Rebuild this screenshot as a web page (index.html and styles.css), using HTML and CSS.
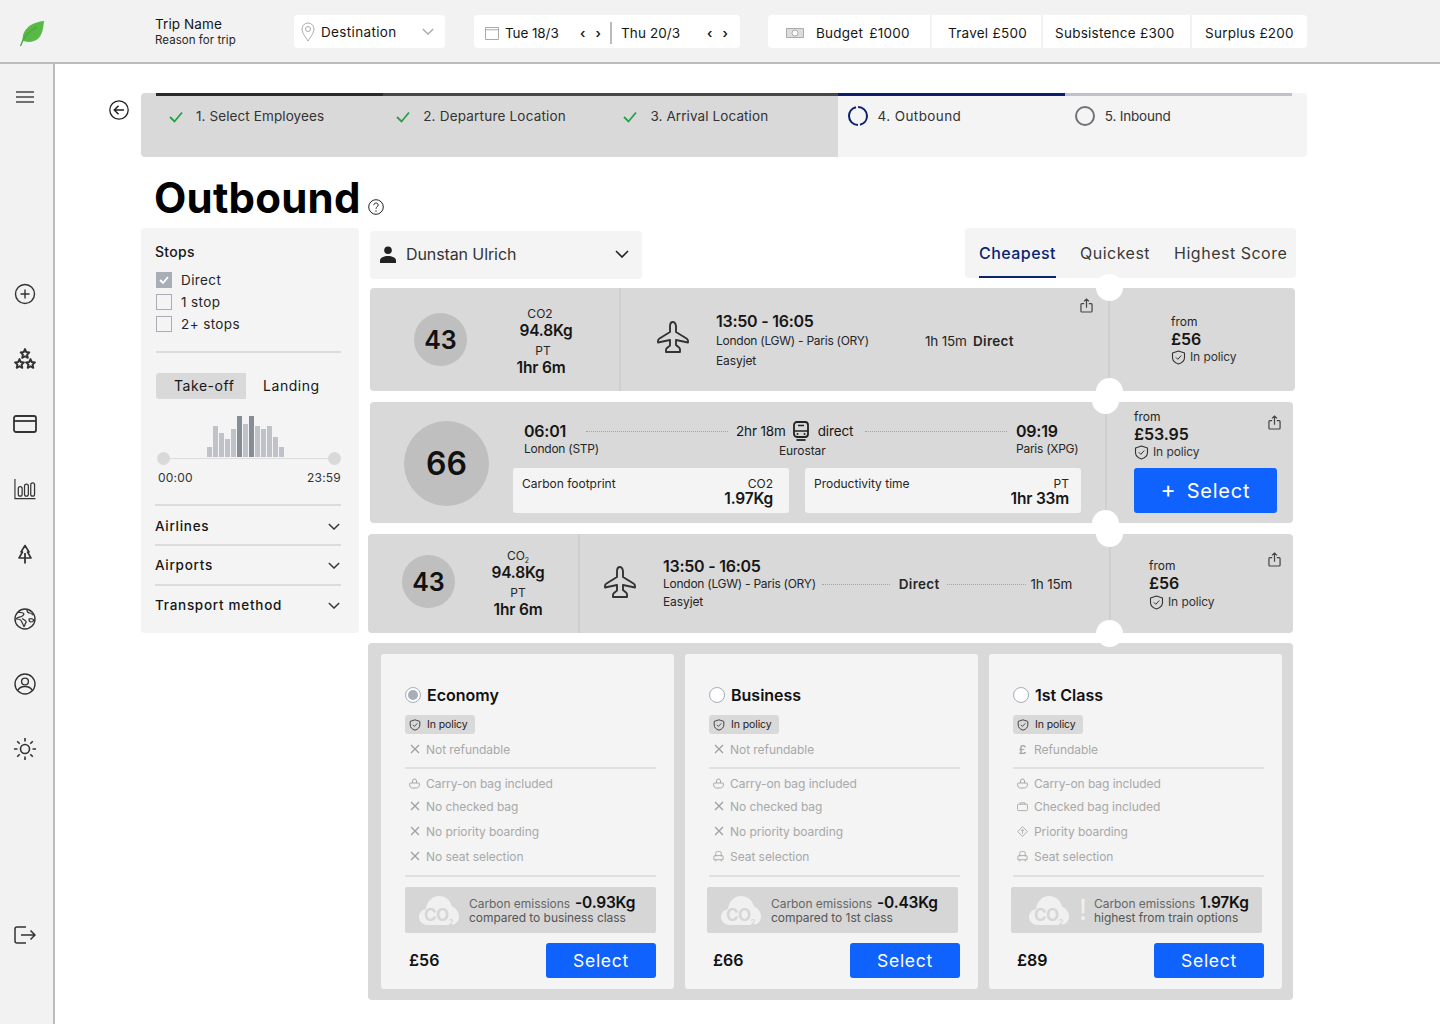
FILE: index.html
```html
<!DOCTYPE html>
<html lang="en">
<head>
<meta charset="utf-8">
<title>Outbound</title>
<link rel="stylesheet" href="styles.css">
</head>
<body>
<svg class="defs" width="0" height="0" aria-hidden="true">
  <defs>
    <symbol id="i-chev" viewBox="0 0 14 8"><path d="M1 1l6 6 6-6" fill="none" stroke="currentColor" stroke-width="1.6"/></symbol>
    <symbol id="i-check" viewBox="0 0 14 12"><path d="M1 6l4.500 4.500L13 1.500" fill="none" stroke="#24a148" stroke-width="1.800"/></symbol>
    <symbol id="i-plane" viewBox="0 0 32 32"><path d="M16 1c-1.900 0-3 2.200-3 4.500V11L2.500 17.500c-1 .7-1.500 1.500-1.500 2.500v1.500l12-2.500v5.500l-3 2.500c-.7.600-1 1.200-1 2V31h14v-2.500c0-.8-.3-1.400-1-2l-3-2.500V19l12 2.500V20c0-1-.5-1.800-1.500-2.500L19 11V5.500C19 3.200 17.900 1 16 1z" fill="none" stroke="#333" stroke-width="1.900" stroke-linejoin="round"/></symbol>
    <symbol id="i-share" viewBox="0 0 14 16"><path d="M4.500 6H2a1 1 0 0 0-1 1v7a1 1 0 0 0 1 1h10a1 1 0 0 0 1-1V7a1 1 0 0 0-1-1H9.500M7 10.500V1M4.300 3.500L7 1l2.700 2.500" fill="none" stroke="#444" stroke-width="1.300"/></symbol>
    <symbol id="i-shield" viewBox="0 0 15 15"><path d="M7.500 1L13.500 3v4.500c0 3.200-2.500 5.400-6 6.500-3.500-1.100-6-3.300-6-6.500V3z" fill="none" stroke="#333" stroke-width="1.100" stroke-linejoin="round"/><path d="M4.800 7.300l2 2 3.500-3.800" fill="none" stroke="#333" stroke-width="1"/></symbol>
    <symbol id="i-x" viewBox="0 0 10 10"><path d="M1 1l8 8M9 1l-8 8" fill="none" stroke="#a0a0a0" stroke-width="1.300"/></symbol>
    <symbol id="i-carry" viewBox="0 0 11 11"><path d="M3.500 5V3a2 2 0 0 1 4 0v2M1.500 5h8a1 1 0 0 1 1 1c0 2.600-1.200 4-3 4h-4c-1.800 0-3-1.400-3-4a1 1 0 0 1 1-1z" fill="none" stroke="#a8a8a8"/></symbol>
    <symbol id="i-bag" viewBox="0 0 12 10"><path d="M1.500 2.500h9a1 1 0 0 1 1 1v5a1 1 0 0 1-1 1h-9a1 1 0 0 1-1-1v-5a1 1 0 0 1 1-1zM3.500 2.500V1h5v1.500" fill="none" stroke="#a8a8a8"/></symbol>
    <symbol id="i-diamond" viewBox="0 0 12 12"><path d="M6 .7L11.300 6 6 11.300.7 6z" fill="none" stroke="#a8a8a8"/><path d="M6 8.500V4M4.300 5.500L6 3.800l1.700 1.700" fill="none" stroke="#a8a8a8" stroke-width=".9"/></symbol>
    <symbol id="i-seat" viewBox="0 0 11 12"><path d="M2.500 6V2.500a2 2 0 0 1 2-2h2a2 2 0 0 1 2 2V6M1.500 5h8a1 1 0 0 1 1 1v3.500H.5V6a1 1 0 0 1 1-1zM2.500 9.500v2M8.500 9.500v2" fill="none" stroke="#a8a8a8"/></symbol>
    <symbol id="i-cloud" viewBox="0 0 40 29"><path d="M9 29C4 29 0 25.500 0 21c0-4 3-7.300 7-8C8 5.500 13 0 20 0c6.500 0 11.500 4.500 13 10.500C37 12 40 16 40 20.500 40 25.500 36 29 31 29z" fill="#f0f0f0"/></symbol>
    <symbol id="i-star" viewBox="0 0 10 10"><path d="M5 1l1.200 2.700 2.800.3-2.100 2 .6 2.900L5 7.500 2.500 8.900l.6-2.900L1 4l2.800-.3z" fill="none" stroke="#333" stroke-width="1.800" stroke-linejoin="round"/></symbol>
  </defs>
</svg>

<header class="topbar">
  <div class="logo-slot">
    <svg class="logo" viewBox="0 0 25 27"><path d="M25 1C24 10 23 18 15 21 11 22.500 6 22 3.500 20.500 3 12 9 2.500 25 1z" fill="#58b947"/><path d="M1.500 26C4 18 10 11 18 7" fill="none" stroke="#4aa83c" stroke-width="1.300"/></svg>
  </div>
  <div class="trip">
    <div class="trip-name">Trip Name</div>
    <div class="trip-reason">Reason for trip</div>
  </div>
  <div class="pill pill-dest">
    <svg class="ic-pin" viewBox="0 0 14 20"><path d="M7 1a6 6 0 0 0-6 6c0 4.200 4 8.500 6 12 2-3.500 6-7.800 6-12a6 6 0 0 0-6-6z" fill="none" stroke="#aaa"/><circle cx="7" cy="7" r="2.500" fill="none" stroke="#aaa"/></svg>
    <span class="dest-label">Destination</span>
    <svg class="ic-dest-chev"><use href="#i-chev"/></svg>
  </div>
  <div class="pill pill-date">
    <svg class="ic-cal" viewBox="0 0 14 14"><path d="M.5 1.500h13v12H.5zM.5 3.800h13" fill="none" stroke="#aaa"/></svg>
    <span class="date-a">Tue 18/3</span>
    <span class="arrows arrows-a">‹ ›</span>
    <span class="date-sep"></span>
    <span class="date-b">Thu 20/3</span>
    <span class="arrows arrows-b">‹ ›</span>
  </div>
  <div class="budget">
    <div class="budget-seg seg-1">
      <svg class="ic-cash" viewBox="0 0 18 10"><path d="M.5.500h17v9H.5z" fill="#ddd" stroke="#aaa"/><circle cx="9" cy="5" r="3" fill="#fff" stroke="#aaa"/></svg>
      <span>Budget</span><span class="b-amt">£1000</span>
    </div>
    <div class="budget-seg seg-2">Travel £500</div>
    <div class="budget-seg seg-3">Subsistence £300</div>
    <div class="budget-seg seg-4">Surplus £200</div>
  </div>
</header>

<div class="layout">
  <nav class="sidebar">
    <svg class="nav-burger" viewBox="0 0 18 12"><path d="M0 1h18M0 6h18M0 11h18" stroke="#444" stroke-width="1.400"/></svg>
    <div class="nav-stack">
      <div class="nav-item"><svg viewBox="0 0 22 22"><circle cx="11" cy="11" r="9.500" fill="none" stroke="#333" stroke-width="1.400"/><path d="M11 6.500v9M6.500 11h9" stroke="#333" stroke-width="1.400"/></svg></div>
      <div class="nav-item"><svg viewBox="0 0 22 22"><use href="#i-star" x="5.500" y="0" width="11" height="11"/><use href="#i-star" x="0" y="10" width="11" height="11"/><use href="#i-star" x="11" y="10" width="11" height="11"/></svg></div>
      <div class="nav-item"><svg viewBox="0 0 24 18" class="nav-card"><rect x="1" y="1" width="22" height="16" rx="2" fill="none" stroke="#333" stroke-width="1.800"/><path d="M1 6h22" stroke="#333" stroke-width="1.800"/></svg></div>
      <div class="nav-item"><svg viewBox="0 0 23 23"><path d="M1 1v20.500h21.500" fill="none" stroke="#333" stroke-width="1.200"/><rect x="4.500" y="9" width="4" height="10" rx="2" fill="none" stroke="#333" stroke-width="1.300"/><rect x="11" y="6.500" width="4" height="12.500" rx="2" fill="none" stroke="#333" stroke-width="1.300"/><rect x="17.500" y="5" width="4" height="14" rx="2" fill="none" stroke="#333" stroke-width="1.300"/></svg></div>
      <div class="nav-item"><svg viewBox="0 0 14 20" class="nav-tree"><path d="M7 1.500L11 8H9.500L13 14H1L4.500 8H3z" fill="none" stroke="#333" stroke-width="1.600" stroke-linejoin="round"/><path d="M7 9v10.500" stroke="#333" stroke-width="1.800"/></svg></div>
      <div class="nav-item"><svg viewBox="0 0 22 22"><circle cx="11" cy="11" r="10" fill="none" stroke="#333" stroke-width="1.400"/><path d="M4 4c2 1 3 0 5 1s0 3-1.500 3.500S3 9 2 11c2 0 4 0 5 1.500s2 4 3 6c1-1 1-3 2-4s-2-3-4-4M13 2c0 2 1 3 3 3s2 2 3 2M15 11c2-1 4 0 5 1-1 2-2 2-3 2s-2-1-2-3z" fill="none" stroke="#333" stroke-width="1.200"/></svg></div>
      <div class="nav-item"><svg viewBox="0 0 22 22"><circle cx="11" cy="11" r="10" fill="none" stroke="#333" stroke-width="1.400"/><circle cx="11" cy="8.500" r="3.400" fill="none" stroke="#333" stroke-width="1.400"/><path d="M3.800 17.500c1.200-2.800 4-4 7.200-4s6 1.200 7.200 4" fill="none" stroke="#333" stroke-width="1.400"/></svg></div>
      <div class="nav-item"><svg viewBox="0 0 22 22"><circle cx="11" cy="11" r="4.500" fill="none" stroke="#333" stroke-width="1.600"/><path d="M11 0v3.500M11 18.500V22M0 11h3.500M18.500 11H22M3.200 3.200l2.500 2.500M16.300 16.300l2.500 2.500M18.800 3.200l-2.500 2.500M5.700 16.300l-2.500 2.500" stroke="#333" stroke-width="1.600"/></svg></div>
    </div>
    <div class="nav-bottom"><svg viewBox="0 0 22 18"><path d="M12 1H3a2 2 0 0 0-2 2v12a2 2 0 0 0 2 2h9" fill="none" stroke="#333" stroke-width="1.500"/><path d="M7 9h14M16.500 4.500L21 9l-4.500 4.500" fill="none" stroke="#333" stroke-width="1.500"/></svg></div>
  </nav>

  <main class="main">
    <div class="back-col">
      <svg class="back" viewBox="0 0 20 20"><circle cx="10" cy="10" r="9.200" fill="none" stroke="#222" stroke-width="1.300"/><path d="M15 10H5.500M9.500 5.800L5.300 10l4.200 4.200" fill="none" stroke="#222" stroke-width="1.500"/></svg>
    </div>
    <div class="content">
      <ol class="stepper">
        <li class="step step-done step-first"><svg class="ic-check"><use href="#i-check"/></svg>1. Select Employees</li>
        <li class="step step-done step-second"><svg class="ic-check"><use href="#i-check"/></svg>2. Departure Location</li>
        <li class="step step-done"><svg class="ic-check"><use href="#i-check"/></svg>3. Arrival Location</li>
        <li class="step step-active"><svg class="ic-ring" viewBox="0 0 20 20"><circle cx="10" cy="10" r="9" fill="none" stroke="#0a1f6e" stroke-width="2" stroke-dasharray="12 2.100 26 2.100 14 2"/></svg>4. Outbound</li>
        <li class="step step-todo"><svg class="ic-ring" viewBox="0 0 20 20"><circle cx="10" cy="10" r="9" fill="none" stroke="#6f727a" stroke-width="2"/></svg>5. Inbound</li>
      </ol>

      <div class="title-row">
        <h1 class="title">Outbound</h1>
        <svg class="help" viewBox="0 0 16 16"><circle cx="8" cy="8" r="7.300" fill="none" stroke="#222"/><path d="M5.800 6.200c0-1.300 1-2.200 2.200-2.200s2.200.8 2.200 2c0 1.700-2.200 1.800-2.200 3.800" fill="none" stroke="#222"/><circle cx="8" cy="12" r=".7" fill="#222"/></svg>
      </div>

      <div class="columns">
        <aside class="filters">
          <div class="f-title">Stops</div>
          <label class="f-check"><span class="box box-on"><svg viewBox="0 0 10 8"><path d="M1 4l3 3 5-6" fill="none" stroke="#fff" stroke-width="1.800"/></svg></span>Direct</label>
          <label class="f-check"><span class="box"></span>1 stop</label>
          <label class="f-check"><span class="box"></span>2+ stops</label>
          <div class="f-rule f-rule-stops"></div>
          <div class="f-tabs">
            <span class="f-tab f-tab-on">Take-off</span>
            <span class="f-tab">Landing</span>
          </div>
          <div class="hist">
            <div class="bars">
              <i class="bar" style="height:10px"></i><i class="bar" style="height:31px"></i><i class="bar" style="height:24px"></i><i class="bar" style="height:18px"></i><i class="bar" style="height:28px"></i><i class="bar bar-dark" style="height:41px"></i><i class="bar" style="height:33px"></i><i class="bar bar-dark" style="height:41px"></i><i class="bar" style="height:31px"></i><i class="bar" style="height:28px"></i><i class="bar" style="height:31px"></i><i class="bar" style="height:20px"></i><i class="bar" style="height:10px"></i>
            </div>
            <div class="slider"><span class="knob"></span><span class="knob"></span></div>
            <div class="hist-times"><span>00:00</span><span>23:59</span></div>
          </div>
          <div class="f-acc f-acc-first"><span>Airlines</span><svg class="ic-acc"><use href="#i-chev"/></svg></div>
          <div class="f-acc"><span>Airports</span><svg class="ic-acc"><use href="#i-chev"/></svg></div>
          <div class="f-acc"><span>Transport method</span><svg class="ic-acc"><use href="#i-chev"/></svg></div>
        </aside>

        <section class="results">
          <div class="results-top">
            <div class="person">
              <svg class="ic-person" viewBox="0 0 16 17"><circle cx="8" cy="4.200" r="3.800" fill="#222"/><path d="M0 17v-2.500C0 11.500 4 10 8 10s8 1.500 8 4.500V17z" fill="#222"/></svg>
              <span class="person-name">Dunstan Ulrich</span>
              <svg class="ic-person-chev"><use href="#i-chev"/></svg>
            </div>
            <div class="sort">
              <span class="sort-tab sort-on">Cheapest</span>
              <span class="sort-tab">Quickest</span>
              <span class="sort-tab">Highest Score</span>
            </div>
          </div>

          <article class="ticket ticket-a">
            <div class="score-col score-col-a">
              <div class="score score-sm">43</div>
              <div class="stats stats-a">
                <div class="stat-label nudge-l">CO2</div><div class="stat-val nudge-r">94.8Kg</div>
                <div class="stat-label stat-gap">PT</div><div class="stat-val nudge-l2">1hr 6m</div>
              </div>
            </div>
            <div class="mid mid-a">
              <svg class="ic-plane"><use href="#i-plane"/></svg>
              <div class="leg">
                <div class="leg-time">13:50 - 16:05</div>
                <div class="leg-route"><span>London (LGW) - Paris (ORY)</span><span class="route-dur">1h 15m</span><strong class="route-direct">Direct</strong></div>
                <div class="leg-air">Easyjet</div>
              </div>
              <svg class="share share-a"><use href="#i-share"/></svg>
            </div>
            <div class="price price-a">
              <div class="from">from</div><div class="amount">£56</div>
              <div class="policy"><svg class="ic-shield"><use href="#i-shield"/></svg>In policy</div>
            </div>
          </article>

          <article class="ticket ticket-b">
            <div class="score-col score-col-b"><div class="score score-lg">66</div></div>
            <div class="rail">
              <div class="rail-top">
                <div class="stop stop-from"><div class="leg-time">06:01</div><div class="stop-name">London (STP)</div></div>
                <span class="dots dots-rail"></span>
                <div class="rail-mid">
                  <div class="rail-dur"><span>2hr 18m</span><svg class="ic-train" viewBox="0 0 16 20"><rect x="1" y="1" width="14" height="15" rx="3" fill="none" stroke="#222" stroke-width="1.800"/><path d="M1 10h14M5 4.500h6" stroke="#222" stroke-width="1.600"/><path d="M3.500 19h9" stroke="#222" stroke-width="1.800"/><circle cx="4.500" cy="13" r="1" fill="#222"/><circle cx="11.500" cy="13" r="1" fill="#222"/></svg><span>direct</span></div>
                  <div class="rail-op">Eurostar</div>
                </div>
                <span class="dots dots-rail"></span>
                <div class="stop stop-to"><div class="leg-time">09:19</div><div class="stop-name">Paris (XPG)</div></div>
              </div>
              <div class="rail-boxes">
                <div class="metric"><span class="metric-name">Carbon footprint</span><div class="metric-side"><div class="metric-label">CO2</div><div class="stat-val">1.97Kg</div></div></div>
                <div class="metric"><span class="metric-name">Productivity time</span><div class="metric-side"><div class="metric-label">PT</div><div class="stat-val">1hr 33m</div></div></div>
              </div>
            </div>
            <div class="price price-b">
              <div class="from">from</div><div class="amount">£53.95</div>
              <div class="policy"><svg class="ic-shield"><use href="#i-shield"/></svg>In policy</div>
              <button class="btn-plus" type="button"><span class="plus">+</span>Select</button>
              <svg class="share share-b"><use href="#i-share"/></svg>
            </div>
          </article>

          <article class="ticket ticket-c">
            <div class="score-col score-col-c">
              <div class="score score-sm">43</div>
              <div class="stats stats-c">
                <div class="stat-label">CO<sub>2</sub></div><div class="stat-val">94.8Kg</div>
                <div class="stat-label stat-gap">PT</div><div class="stat-val">1hr 6m</div>
              </div>
            </div>
            <div class="mid mid-c">
              <svg class="ic-plane"><use href="#i-plane"/></svg>
              <div class="leg">
                <div class="leg-time">13:50 - 16:05</div>
                <div class="leg-route"><span>London (LGW) - Paris (ORY)</span><span class="dots dots-c1"></span><strong class="route-direct">Direct</strong><span class="dots dots-c2"></span><span class="route-dur-c">1h 15m</span></div>
                <div class="leg-air">Easyjet</div>
              </div>
            </div>
            <div class="price price-c">
              <div class="from">from</div><div class="amount">£56</div>
              <div class="policy"><svg class="ic-shield"><use href="#i-shield"/></svg>In policy</div>
              <svg class="share share-c"><use href="#i-share"/></svg>
            </div>
          </article>

          <div class="classes">
            <div class="class-card">
              <div class="class-head"><span class="radio radio-on"></span><span class="class-name">Economy</span></div>
              <div class="badge"><svg class="ic-badge"><use href="#i-shield"/></svg>In policy</div>
              <div class="feat feat-first"><span class="feat-ic"><svg class="ic-x"><use href="#i-x"/></svg></span>Not refundable</div>
              <div class="rule"></div>
              <div class="feat feat-r1"><span class="feat-ic"><svg class="ic-sm"><use href="#i-carry"/></svg></span>Carry-on bag included</div>
              <div class="feat feat-r2"><span class="feat-ic"><svg class="ic-x"><use href="#i-x"/></svg></span>No checked bag</div>
              <div class="feat feat-r3"><span class="feat-ic"><svg class="ic-x"><use href="#i-x"/></svg></span>No priority boarding</div>
              <div class="feat feat-r3"><span class="feat-ic"><svg class="ic-x"><use href="#i-x"/></svg></span>No seat selection</div>
              <div class="rule rule-b"></div>
              <div class="carbon">
                <div class="cloud"><svg class="ic-cloud"><use href="#i-cloud"/></svg><span class="cloud-text">CO<sub>2</sub></span></div>
                <div class="carbon-text"><div class="carbon-l1">Carbon emissions <strong>-0.93Kg</strong></div><div class="carbon-l2">compared to business class</div></div>
              </div>
              <div class="class-foot"><span class="class-price">£56</span><button class="btn" type="button">Select</button></div>
            </div>

            <div class="class-card">
              <div class="class-head"><span class="radio"></span><span class="class-name">Business</span></div>
              <div class="badge"><svg class="ic-badge"><use href="#i-shield"/></svg>In policy</div>
              <div class="feat feat-first"><span class="feat-ic"><svg class="ic-x"><use href="#i-x"/></svg></span>Not refundable</div>
              <div class="rule"></div>
              <div class="feat feat-r1"><span class="feat-ic"><svg class="ic-sm"><use href="#i-carry"/></svg></span>Carry-on bag included</div>
              <div class="feat feat-r2"><span class="feat-ic"><svg class="ic-x"><use href="#i-x"/></svg></span>No checked bag</div>
              <div class="feat feat-r3"><span class="feat-ic"><svg class="ic-x"><use href="#i-x"/></svg></span>No priority boarding</div>
              <div class="feat feat-r3"><span class="feat-ic"><svg class="ic-sm"><use href="#i-seat"/></svg></span>Seat selection</div>
              <div class="rule rule-b"></div>
              <div class="carbon carbon-shift">
                <div class="cloud"><svg class="ic-cloud"><use href="#i-cloud"/></svg><span class="cloud-text">CO<sub>2</sub></span></div>
                <div class="carbon-text"><div class="carbon-l1">Carbon emissions <strong>-0.43Kg</strong></div><div class="carbon-l2">compared to 1st class</div></div>
              </div>
              <div class="class-foot"><span class="class-price">£66</span><button class="btn" type="button">Select</button></div>
            </div>

            <div class="class-card">
              <div class="class-head"><span class="radio"></span><span class="class-name">1st Class</span></div>
              <div class="badge"><svg class="ic-badge"><use href="#i-shield"/></svg>In policy</div>
              <div class="feat feat-first"><span class="feat-ic feat-pound">£</span>Refundable</div>
              <div class="rule"></div>
              <div class="feat feat-r1"><span class="feat-ic"><svg class="ic-sm"><use href="#i-carry"/></svg></span>Carry-on bag included</div>
              <div class="feat feat-r2"><span class="feat-ic"><svg class="ic-sm"><use href="#i-bag"/></svg></span>Checked bag included</div>
              <div class="feat feat-r3"><span class="feat-ic"><svg class="ic-sm"><use href="#i-diamond"/></svg></span>Priority boarding</div>
              <div class="feat feat-r3"><span class="feat-ic"><svg class="ic-sm"><use href="#i-seat"/></svg></span>Seat selection</div>
              <div class="rule rule-b"></div>
              <div class="carbon carbon-shift carbon-wide">
                <div class="cloud"><svg class="ic-cloud"><use href="#i-cloud"/></svg><span class="cloud-text">CO<sub>2</sub></span></div>
                <span class="bang">!</span>
                <div class="carbon-text"><div class="carbon-l1">Carbon emissions <strong>1.97Kg</strong></div><div class="carbon-l2">highest from train options</div></div>
              </div>
              <div class="class-foot"><span class="class-price">£89</span><button class="btn" type="button">Select</button></div>
            </div>
          </div>
        </section>
      </div>
    </div>
  </main>
</div>
</body>
</html>
```
FILE: styles.css
```css
* { box-sizing: border-box; }
html, body { margin: 0; padding: 0; }
body {
  background: #fff;
  color: #161616;
  font-family: "Inter", "Liberation Sans", sans-serif;
  font-size: 14px;
  height: 1024px;
  overflow: hidden;
}
.defs { position: absolute; }
svg { display: block; }
button { font-family: inherit; border: 0; cursor: pointer; }

/* top bar */
.topbar {
  height: 64px;
  display: flex;
  align-items: flex-start;
  padding-top: 15px;
  background: #f2f2f2;
  border-bottom: 2px solid #bcbcbc;
}
.logo-slot { width: 155px; padding: 5px 0 0 19px; }
.logo { width: 25px; height: 27px; }
.trip { width: 139px; padding-top: 1px; }
.trip-name { font-size: 13.5px; line-height: 17px; letter-spacing: .1px; }
.trip-reason { font-size: 11.5px; line-height: 14px; letter-spacing: .05px; color: #262626; }
.pill {
  background: #fff;
  border-radius: 4px;
  height: 33px;
  display: flex;
  align-items: center;
  font-size: 13.5px;
  letter-spacing: -.1px;
}
.pill-dest { width: 151px; padding-left: 7px; margin-right: 29px; }
.ic-pin { width: 14px; height: 20px; margin-right: 6px; }
.dest-label { flex: 1; letter-spacing: .35px; }
.ic-dest-chev { width: 12px; height: 7px; margin-right: 11px; color: #aaa; }
.pill-date { width: 266px; padding: 2px 0 0 11px; margin-right: 28px; }
.ic-cal { width: 14px; height: 14px; margin-right: 6px; }
.date-a { width: 75px; }
.arrows { font-size: 13px; word-spacing: 7px; font-weight: 600; }
.arrows-a { width: 30px; }
.date-sep { width: 2px; height: 22px; background: #bbb; margin-right: 9px; }
.date-b { width: 86px; letter-spacing: .1px; }
.budget { display: flex; gap: 2px; width: 539px; height: 33px; }
.budget-seg {
  background: #fff;
  display: flex;
  align-items: center;
  padding-top: 2px;
  font-size: 13.5px;
  letter-spacing: .25px;
  white-space: nowrap;
}
.seg-1 { width: 162px; padding-left: 18px; border-radius: 4px 0 0 4px; }
.seg-2 { width: 109px; padding-left: 16px; }
.seg-3 { width: 147px; padding-left: 12px; }
.seg-4 { width: 115px; padding-left: 13px; border-radius: 0 4px 4px 0; }
.ic-cash { width: 18px; height: 10px; margin-right: 12px; }
.b-amt { margin-left: 6px; }

/* layout */
.layout { display: flex; height: 960px; }
.sidebar {
  width: 55px;
  background: #f2f2f2;
  border-right: 2px solid #bcbcbc;
  padding-right: 3px;
  display: flex;
  flex-direction: column;
  align-items: center;
}
.nav-burger { width: 18px; height: 12px; margin-top: 27px; }
.nav-stack { margin-top: 158px; }
.nav-item { width: 50px; height: 65px; display: flex; align-items: center; justify-content: center; }
.nav-item svg { width: 22px; height: 22px; }
.nav-item .nav-card { width: 24px; height: 18px; }
.nav-item .nav-tree { width: 14px; height: 20px; }
.nav-bottom { margin-top: 145px; }
.nav-bottom svg { width: 22px; height: 18px; }

.main { flex: 1; display: flex; padding: 29px 0 0 54px; }
.back-col { width: 32px; padding-top: 7px; }
.back { width: 20px; height: 20px; }
.content { width: 1166px; }

/* stepper */
.stepper {
  list-style: none;
  margin: 0;
  padding: 0 15px;
  height: 64px;
  display: grid;
  grid-template-columns: repeat(5, 1fr);
  background: linear-gradient(90deg, #d9d9d9 697px, #f4f4f4 697px);
  border-radius: 4px;
}
.step {
  border-top: 3px solid #474747;
  padding: 10px 0 0 13px;
  height: 64px;
  display: flex;
  align-items: flex-start;
  font-size: 13.5px;
  line-height: 20px;
  letter-spacing: .1px;
  color: #333;
}
.step-first { border-top-color: #2a2a2a; }
.step-second { letter-spacing: .2px; }
.step-active { border-top-color: #0a1f6e; padding-left: 10px; letter-spacing: .4px; }
.step-todo { border-top-color: #bfc2cc; padding-left: 10px; letter-spacing: -.2px; }
.ic-check { width: 14px; height: 12px; margin: 5px 13px 0 0; }
.ic-ring { width: 20px; height: 20px; margin-right: 10px; }

/* title */
.title-row { height: 71px; padding: 17px 0 0 13px; display: flex; }
.title { margin: 0; font-size: 42px; line-height: 48px; font-weight: 700; letter-spacing: .2px; color: #000; }
.help { width: 16px; height: 16px; margin: 25px 0 0 7px; }

.columns { display: flex; gap: 9px; }

/* filters */
.filters {
  width: 218px;
  height: 405px;
  background: #f4f4f4;
  border-radius: 4px;
  padding: 15px 18px 0 14px;
  flex-shrink: 0;
}
.f-title { font-size: 14px; line-height: 18px; font-weight: 500; letter-spacing: .3px; margin-bottom: 11px; }
.f-check {
  display: flex;
  align-items: center;
  height: 16px;
  margin: 0 0 6px 1px;
  font-size: 13.5px;
  letter-spacing: .4px;
  color: #262626;
}
.box {
  width: 16px;
  height: 16px;
  border: 1px solid #a8adb8;
  margin-right: 9px;
  display: flex;
  align-items: center;
  justify-content: center;
}
.box-on { background: #a8adb8; }
.box svg { width: 10px; height: 8px; }
.f-rule { height: 2px; background: #dcdcdc; margin-left: 1px; }
.f-rule-stops { margin-top: 19px; }
.f-tabs { display: flex; margin: 20px 0 0 1px; font-size: 14px; letter-spacing: .55px; }
.f-tab { height: 26px; line-height: 26px; padding-left: 17px; flex: none; }
.f-tab-on { width: 90px; padding-left: 18px; background: #d9d9d9; border-radius: 3px 0 0 3px; }
.hist { margin: 17px 0 0 1px; position: relative; }
.bars { display: flex; align-items: flex-end; gap: 1px; height: 41px; margin-left: 51px; }
.bar { width: 5px; background: #bfc3c9; display: block; }
.bar-dark { background: #878d96; }
.slider { height: 1px; background: #dcdcdc; margin: 1px 7px 0 8px; position: relative; display: flex; justify-content: space-between; }
.knob { width: 13px; height: 13px; border-radius: 50%; background: #d9d9d9; margin: -6px -7px 0; }
.hist-times { display: flex; justify-content: space-between; margin: 11px 0 0 2px; font-size: 12px; line-height: 16px; letter-spacing: .2px; color: #333; }
.f-acc {
  border-top: 2px solid #dcdcdc;
  height: 40px;
  display: flex;
  align-items: center;
  justify-content: space-between;
  font-size: 13.5px;
  font-weight: 500;
  letter-spacing: .72px;
  padding-right: 1px;
}
.f-acc-first { margin-top: 18px; padding-top: 2px; }
.ic-acc { width: 12px; height: 7px; color: #333; }

/* results */
.results { width: 928px; }
.results-top { display: flex; justify-content: space-between; height: 50px; padding-left: 2px; }
.person {
  width: 272px;
  height: 48px;
  margin-top: 3px;
  background: #f4f4f4;
  border-radius: 4px;
  display: flex;
  align-items: center;
  padding: 0 13px 2px 10px;
}
.ic-person { width: 16px; height: 17px; margin-right: 10px; }
.person-name { flex: 1; font-size: 16px; color: #333; letter-spacing: -.1px; }
.ic-person-chev { width: 14px; height: 8px; color: #222; }
.sort {
  width: 331px;
  height: 50px;
  background: #f4f4f4;
  border-radius: 4px;
  display: flex;
  padding-left: 14px;
  gap: 24px;
}
.sort-tab { font-size: 16px; line-height: 50px; height: 50px; letter-spacing: .5px; color: #393939; white-space: nowrap; }
.sort-on { color: #0a2472; border-bottom: 2px solid #0a2472; font-weight: 500; letter-spacing: .45px; }

/* tickets */
.ticket { position: relative; display: flex; background: #d9d9d9; border-radius: 4px; }
.ticket::before, .ticket::after {
  content: "";
  position: absolute;
  width: 27px;
  height: 27px;
  border-radius: 50%;
  background: #fff;
  z-index: 1;
}
.ticket-a { width: 925px; height: 103px; margin: 10px 0 0 2px; }
.ticket-a::before { left: 726px; top: -14px; }
.ticket-a::after { left: 726px; bottom: -14px; }
.ticket-b { width: 923px; height: 121px; margin: 11px 0 0 2px; }
.ticket-b::before { left: 722px; top: -15px; }
.ticket-b::after { left: 722px; bottom: -14px; }
.ticket-c { width: 925px; height: 99px; margin: 11px 0 0; }
.ticket-c::before { left: 728px; top: -14px; }
.ticket-c::after { left: 728px; bottom: -14px; }

.score-col { display: flex; align-items: center; flex-shrink: 0; border-right: 2px solid #cfcfcf; }
.score-col-a { width: 251px; padding-left: 44px; }
.score-col-b { width: 143px; padding: 2px 0 0 34px; border-right: 0; }
.score-col-c { width: 212px; padding-left: 34px; }
.score {
  border-radius: 50%;
  background: #bfbfbf;
  display: flex;
  align-items: center;
  justify-content: center;
  font-weight: 600;
  color: #111;
  flex-shrink: 0;
}
.score-sm { width: 53px; height: 53px; font-size: 25px; }
.score-col-c .score { margin-bottom: 4px; }
.score-lg { width: 85px; height: 85px; font-size: 32px; }
.stats { width: 100px; margin-left: 26px; text-align: center; }
.stats-a { padding-top: 4px; }
.nudge-l { padding-right: 6px; }
.nudge-r { padding-left: 6px; }
.nudge-l2 { padding-right: 4px; }
.stats-c { margin-left: 13px; }
.stat-label { font-size: 12px; line-height: 15px; color: #262626; }
.stat-label sub { font-size: 7px; line-height: 0; }
.stat-val { font-size: 15.5px; line-height: 19px; font-weight: 600; color: #161616; letter-spacing: -.2px; }
.stat-gap { margin-top: 3px; }

.mid { position: relative; display: flex; flex-shrink: 0; }
.mid-a { width: 487px; padding: 23px 0 0 36px; }
.mid-c { width: 529px; padding: 22px 0 0 24px; }
.ic-plane { width: 32px; height: 32px; margin: 10px 27px 0 0; }
.leg { flex: 1; }
.leg-time { font-size: 16px; line-height: 20px; font-weight: 600; color: #161616; letter-spacing: -.25px; white-space: nowrap; }
.leg-route { display: flex; align-items: center; font-size: 12px; line-height: 16px; margin-top: 2px; color: #262626; white-space: nowrap; letter-spacing: -.26px; }
.leg-air { font-size: 12px; line-height: 16px; margin-top: 4px; color: #262626; letter-spacing: -.1px; }
.mid-c .leg-route { margin-top: 0; }
.mid-c .leg-air { margin-top: 2px; }
.route-dur { position: absolute; left: 304px; font-size: 13.5px; letter-spacing: -.2px; }
.route-direct { position: absolute; left: 352px; font-size: 13.5px; font-weight: 600; letter-spacing: .3px; }
.mid-c .route-direct { position: static; margin: 0 7px 0 9px; }
.route-dur-c { font-size: 13.5px; margin-left: 5px; letter-spacing: -.2px; }
.dots { border-top: 1px dotted #a4a4a4; height: 0; display: block; }
.dots-c1 { width: 68px; margin-left: 6px; }
.dots-c2 { width: 79px; }
.dots-rail { flex: 1; margin-top: 10px; }
.share { position: absolute; width: 13px; height: 15px; z-index: 2; }
.share-a { right: 15px; top: 10px; }
.share-b { right: 12px; top: 13px; }
.share-c { right: 12px; top: 18px; }

.price { position: relative; flex: 1; border-left: 2px solid #cfcfcf; display: flex; flex-direction: column; }
.price-a { padding: 26px 0 0 61px; }
.price-b { padding: 7px 0 0 27px; }
.price-c { padding: 24px 0 0 38px; }
.from { font-size: 12px; line-height: 16px; color: #262626; }
.amount { font-size: 16px; line-height: 20px; font-weight: 600; margin-top: -1px; letter-spacing: -.1px; }
.policy { display: flex; align-items: center; font-size: 12px; line-height: 16px; color: #333; letter-spacing: -.1px; }
.price-c .policy { margin-top: 1px; }
.ic-shield { width: 15px; height: 15px; margin-right: 4px; }

.rail { width: 568px; margin-right: 24px; padding-top: 19px; flex-shrink: 0; }
.rail-top { display: flex; height: 47px; padding-left: 11px; }
.stop-from { width: 62px; }
.stop-to { width: 65px; margin-left: 9px; }
.stop-name { font-size: 12px; line-height: 16px; color: #262626; white-space: nowrap; letter-spacing: -.26px; }
.rail-mid { width: 121px; margin: 0 8px; }
.rail-dur { display: flex; align-items: flex-start; font-size: 13.5px; line-height: 20px; white-space: nowrap; letter-spacing: -.15px; }
.ic-train { width: 16px; height: 20px; margin: 0 9px 0 7px; flex-shrink: 0; }
.rail-op { font-size: 12px; line-height: 16px; margin: 2px 0 0 43px; color: #262626; letter-spacing: -.1px; }
.rail-boxes { display: flex; gap: 16px; }
.metric {
  width: 276px;
  height: 45px;
  background: #f4f4f4;
  border-radius: 3px;
  display: flex;
  justify-content: space-between;
  padding: 8px 16px 0 9px;
}
.metric + .metric { padding-right: 12px; }
.metric-name { font-size: 12px; line-height: 16px; color: #262626; }
.metric-side { text-align: right; }
.metric-label { font-size: 12px; line-height: 15px; color: #262626; }
.metric .stat-val { line-height: 16px; }
.btn-plus {
  width: 143px;
  height: 45px;
  margin-top: auto;
  margin-bottom: 10px;
  background: #0f62fe;
  color: #fff;
  border-radius: 3px;
  font-size: 20px;
  letter-spacing: .8px;
}
.plus { margin-right: 10px; font-size: 23px; line-height: 20px; }

/* classes */
.classes {
  width: 925px;
  height: 357px;
  margin-top: 10px;
  background: #d9d9d9;
  border-radius: 4px;
  padding: 11px 11px 11px 13px;
  display: flex;
  gap: 11px;
}
.class-card { width: 293px; height: 335px; background: #f4f4f4; border-radius: 3px; padding: 33px 18px 0 24px; }
.class-head { display: flex; align-items: center; height: 16px; }
.radio { width: 16px; height: 16px; border: 1px solid #a8adb8; border-radius: 50%; margin-right: 6px; display: flex; align-items: center; justify-content: center; background: #fff; }
.radio-on::after { content: ""; width: 10px; height: 10px; border-radius: 50%; background: #a8adb8; }
.class-name { font-size: 16px; font-weight: 600; color: #111; }
.badge {
  width: 70px;
  height: 19px;
  margin-top: 12px;
  background: #d9d9d9;
  border-radius: 3px;
  display: flex;
  align-items: center;
  padding-left: 4px;
  font-size: 10.5px;
  letter-spacing: -.1px;
  color: #222;
  white-space: nowrap;
}
.ic-badge { width: 12px; height: 12px; margin-right: 6px; }
.feat { display: flex; align-items: center; height: 16px; font-size: 12px; color: #a8a8a8; white-space: nowrap; letter-spacing: -.05px; }
.feat-ic { width: 21px; display: flex; justify-content: center; padding-right: 2px; }
.feat-first { margin-top: 7px; }
.feat-r1 { margin-top: 6px; }
.feat-r2 { margin-top: 7px; }
.feat-r3 { margin-top: 9px; }
.feat-pound { font-size: 12px; font-weight: 600; }
.ic-x { width: 10px; height: 10px; }
.ic-sm { width: 11px; height: 11px; }
.rule { height: 2px; background: #e0e0e0; margin-top: 10px; }
.rule-b { margin-top: 11px; }
.carbon {
  width: 251px;
  height: 46px;
  margin-top: 10px;
  background: #d6d6d6;
  border-radius: 2px;
  display: flex;
  align-items: center;
  padding-left: 14px;
}
.carbon-shift { margin-left: -2px; }
.carbon-wide { padding-left: 18px; }
.cloud { position: relative; width: 40px; height: 29px; margin-right: 10px; flex-shrink: 0; }
.ic-cloud { width: 40px; height: 29px; }
.cloud-text { position: absolute; left: 5px; bottom: 1px; font-size: 17px; line-height: 18px; font-weight: 700; letter-spacing: -.5px; color: #d6d6d6; white-space: nowrap; }
.cloud-text sub { font-size: 7px; line-height: 0; }
.bang { width: 15px; font-size: 28px; font-weight: 400; color: #f0f0f0; line-height: 29px; flex-shrink: 0; }
.carbon-text { white-space: nowrap; }
.carbon-l1 { font-size: 12px; line-height: 14px; color: #666; letter-spacing: -.05px; display: flex; align-items: baseline; gap: 5px; }
.carbon-l1 strong { font-size: 15.5px; line-height: 14px; font-weight: 600; color: #111; letter-spacing: -.2px; }
.carbon-l2 { font-size: 12px; line-height: 14px; color: #555; letter-spacing: -.05px; }
.class-foot { display: flex; align-items: center; justify-content: space-between; margin-top: 10px; height: 35px; padding-left: 4px; }
.class-price { font-size: 16px; font-weight: 600; color: #111; padding-bottom: 2px; }
.btn { width: 110px; height: 35px; padding-bottom: 2px; background: #0f62fe; color: #fff; border-radius: 3px; font-size: 17.5px; letter-spacing: .7px; }
```
